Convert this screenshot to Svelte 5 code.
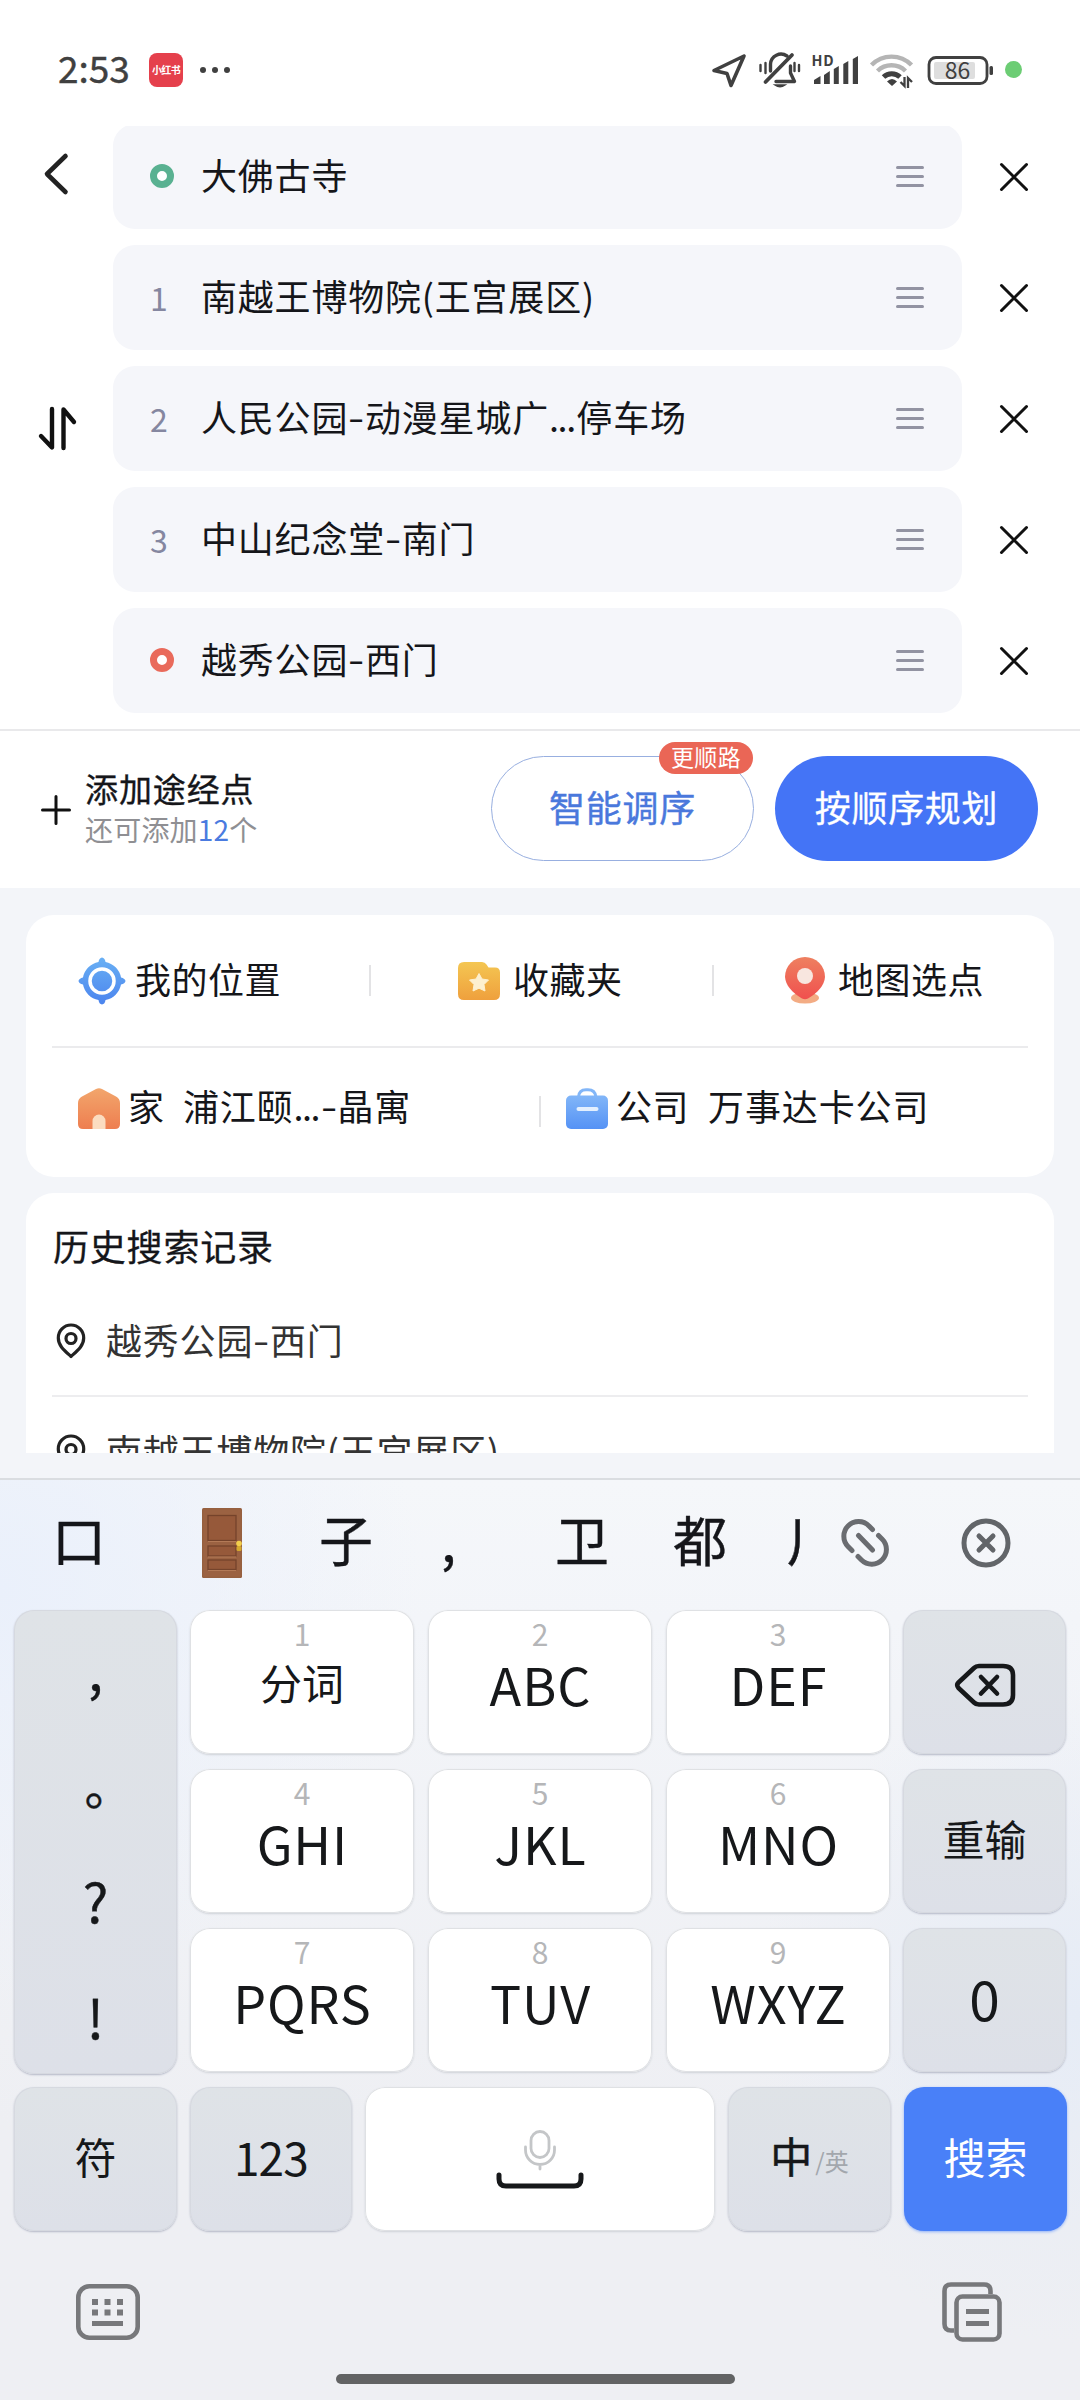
<script>
  const stops = [
    { kind: 'start', name: '大佛古寺' },
    { kind: 'via', no: 1, name: '南越王博物院(王宫展区)' },
    { kind: 'via', no: 2, name: '人民公园-动漫星城广...停车场' },
    { kind: 'via', no: 3, name: '中山纪念堂-南门' },
    { kind: 'end', name: '越秀公园-西门' }
  ];
  const history = ['越秀公园-西门', '南越王博物院(王宫展区)'];
  const letterKeys = [
    ['1', '分词'], ['2', 'ABC'], ['3', 'DEF'],
    ['4', 'GHI'], ['5', 'JKL'], ['6', 'MNO'],
    ['7', 'PQRS'], ['8', 'TUV'], ['9', 'WXYZ']
  ];
  // Splits a place name so hyphens and ellipses can have their own widths.
  const parts = (name) => name.split(/(-|\.\.\.)/);
</script>

{#snippet place(name)}
  {#each parts(name) as p}{#if p === '-'}<i class="dash">-</i>{:else if p === '...'}<i class="ell">...</i>{:else}{p}{/if}{/each}
{/snippet}

<div class="screen">
  <header class="status">
    <span class="time">2:53</span>
    <span class="app">小红书</span>
    <span class="dots"><b></b><b></b><b></b></span>
    <span class="grow"></span>
    <svg class="st-arrow" width="36" height="40" viewBox="711 50 36 40"><path d="M744 56 L714 70.5 L727 73.5 L731 85.5 Z" fill="none" stroke="#404040" stroke-width="3.6" stroke-linejoin="round"/></svg>
    <svg class="st-bell" width="44" height="40" viewBox="758 50 44 40" fill="none" stroke="#404040" stroke-width="3.4" stroke-linecap="round">
      <path d="M787 56 A10.500 10.500 0 0 0 770.500 64 V71"/><path d="M790.500 66 V73 L794.500 81.500 H776" stroke-linejoin="round"/>
      <path d="M792 55 L765.500 82" stroke-width="3.8"/><path d="M775 85 Q780 88.500 785 85Z" fill="#404040" stroke-width="1.500"/>
      <path d="M760.500 65 V71 M765.500 63 V73 M794.500 63 V71 M799 65 V71" stroke-width="2.4"/>
    </svg>
    <svg class="st-signal" width="48" height="40" viewBox="811 50 48 40" fill="#404040">
      <text x="811.5" y="65.5" font-size="14.5" font-weight="bold" textLength="22">HD</text>
      <path d="M814 84 V80 L820.500 76 V84Z M824 84 V75 L829.800 71 V84Z M833.800 84 V69 L838.800 66 V84Z M843.300 84 V64 L848.300 61 V84Z M852.800 84 V59 L858 56 V84Z"/>
    </svg>
    <svg class="st-wifi" width="45" height="40" viewBox="869 50 45 40" fill="none" stroke-width="4.400">
      <path d="M871.500 65 A28 28 0 0 1 911.500 65" stroke="#b5b5b5"/><path d="M877.500 71 A20 20 0 0 1 905.500 71" stroke="#b5b5b5"/>
      <path d="M883.500 77 A12 12 0 0 1 900 77" stroke="#404040" stroke-width="5"/>
      <path d="M892 86 L887 81.500 Q892 76.500 897 81.500Z" fill="#404040"/><path d="M904.500 77 V86 L900.500 82 M908 88 V78 L912 82" stroke="#404040" stroke-width="2.300"/>
    </svg>
    <svg class="st-batt" width="68" height="34" viewBox="927 52 68 34">
      <rect x="929" y="56.500" width="58" height="26" rx="7" fill="none" stroke="#404040" stroke-width="2.800"/>
      <rect x="934" y="61" width="41" height="17" rx="2" fill="#dedede"/><rect x="989.500" y="65" width="3.500" height="9" rx="1.500" fill="#404040"/>
      <text x="957.500" y="77.500" text-anchor="middle" font-size="23" fill="#404040">86</text>
    </svg>
    <span class="live"></span>
  </header>

  <section class="route">
    <div class="side">
      <svg class="back" width="30" height="46" viewBox="42 151 30 46"><path d="M65.500 156 L47 174 L65.500 192" fill="none" stroke="#222" stroke-width="4.600" stroke-linecap="round" stroke-linejoin="round"/></svg>
      <svg class="swap" width="42" height="46" viewBox="37 405 42 46"><path d="M41 436 L52 447.500 V409 M63.500 448 V409.500 L74 422" fill="none" stroke="#111" stroke-width="4.400" stroke-linecap="round" stroke-linejoin="round"/></svg>
    </div>
    <div class="stops">
      {#each stops as s}
        <div class="stop">
          <div class="field">
            <span class="mark">{#if s.kind === 'via'}{s.no}{:else}<span class="ring {s.kind}"></span>{/if}</span>
            <span class="name">{@render place(s.name)}</span>
            <span class="drag"><b></b><b></b><b></b></span>
          </div>
          <svg class="close" width="32" height="32" viewBox="0 0 32 32"><path d="M3.500 3.500 L28.500 28.500 M28.500 3.500 L3.500 28.500" stroke="#111" stroke-width="3" stroke-linecap="round"/></svg>
        </div>
      {/each}
    </div>
  </section>

  <section class="actions">
    <svg class="plus" width="30" height="30" viewBox="0 0 30 30"><path d="M15 1.500 V28.500 M1.500 15 H28.500" stroke="#111" stroke-width="3" stroke-linecap="round"/></svg>
    <div class="add"><div class="add-t">添加途经点</div><div class="add-s">还可添加<em>12</em>个</div></div>
    <button class="pill outline">智能调序<span class="badge">更顺路</span></button>
    <button class="pill solid">按顺序规划</button>
  </section>

  <main class="panel">
    <div class="card quick">
      <div class="qrow">
        <span class="q q1">
          <svg width="48" height="48" viewBox="0 0 48 48"><defs><linearGradient id="gb" x2="0" y2="1"><stop stop-color="#69b0f4"/><stop offset="1" stop-color="#4b84ee"/></linearGradient></defs><path d="M24 .5 Q27 1 27.500 5 A19.500 19.500 0 0 1 43 20.500 Q47 21.500 47.500 24 Q47 26.500 43 27.500 A19.500 19.500 0 0 1 27.500 43 Q27 47 24 47.500 Q21 47 20.500 43 A19.500 19.500 0 0 1 5 27.500 Q1 26.500 .5 24 Q1 21.500 5 20.500 A19.500 19.500 0 0 1 20.500 5 Q21 1 24 .5Z" fill="url(#gb)"/><circle cx="24" cy="24" r="12" fill="none" stroke="#fff" stroke-width="3.500"/></svg>
          <span class="t">我的位置</span></span>
        <span class="bar b1"></span>
        <span class="q q2">
          <svg width="42" height="38" viewBox="0 0 42 38"><defs><linearGradient id="gf" x2="0" y2="1"><stop stop-color="#f4c652"/><stop offset="1" stop-color="#efa03d"/></linearGradient></defs><path d="M6 0 H24 Q27 0 28.500 2.500 L30.500 5.500 H37 Q42 5.500 42 10.500 V32 Q42 38 36 38 H6 Q0 38 0 32 V6 Q0 0 6 0Z" fill="url(#gf)"/><path d="M21 11.500 L24 17 L30.500 18 L26 22.500 L27 29 L21 26.200 L15 29 L16 22.500 L11.500 18 L18 17Z" fill="#fdf0cf" stroke="#fdf0cf" stroke-linejoin="round"/></svg>
          <span class="t">收藏夹</span></span>
        <span class="bar b2"></span>
        <span class="q q3">
          <svg width="40" height="47" viewBox="0 0 40 47"><defs><linearGradient id="gp" x2="0" y2="1"><stop stop-color="#ee8060"/><stop offset="1" stop-color="#f0504e"/></linearGradient></defs><ellipse cx="20" cy="41" rx="14" ry="5.500" fill="#f3ac84"/><path d="M20 0 A20 20 0 0 1 40 20 Q39 32 23 41.500 Q20 43 17 41.500 Q1 32 0 20 A20 20 0 0 1 20 0Z" fill="url(#gp)"/><circle cx="20" cy="19" r="8" fill="#f8e6df"/></svg>
          <span class="t">地图选点</span></span>
      </div>
      <div class="qrow second">
        <span class="q q4">
          <svg width="42" height="41" viewBox="0 0 42 41"><defs><linearGradient id="gh" x2="0" y2="1"><stop stop-color="#f2a66c"/><stop offset="1" stop-color="#ee7e50"/></linearGradient></defs><path d="M18 1 Q21 -.7 24 1 L38 8.500 Q42 10.500 42 15 V36 Q42 41 37 41 H5 Q0 41 0 36 V15 Q0 10.500 4 8.500Z" fill="url(#gh)"/><path d="M14.500 41 V33 A6.500 6.500 0 0 1 27.500 33 V41Z" fill="#fbdcc0"/></svg>
          <span class="t">家</span></span><span class="t v1">{@render place('浦江颐...-晶寓')}</span>
        <span class="bar b3"></span>
        <span class="q q5">
          <svg width="42" height="41" viewBox="0 0 42 41"><defs><linearGradient id="gw" x2="0" y2="1"><stop stop-color="#82b6f8"/><stop offset="1" stop-color="#5592f5"/></linearGradient></defs><path d="M12.500 9 Q13 1.800 20 1.800 H22 Q29 1.800 30 9" fill="none" stroke="#82b6f8" stroke-width="3"/><rect y="7.500" width="42" height="33.500" rx="5" fill="url(#gw)"/><path d="M12.500 21 H30.500" stroke="#e3effe" stroke-width="4" stroke-linecap="round"/></svg>
          <span class="t">公司</span></span><span class="t v2">万事达卡公司</span>
      </div>
    </div>
    <div class="card hist">
      <h2>历史搜索记录</h2>
      {#each history as h}
        <div class="hrow">
          <svg width="30" height="36" viewBox="0 0 30 36" fill="none" stroke="#222" stroke-width="3.200" stroke-linejoin="round"><path d="M15 2 A12.700 12.700 0 0 1 27.700 15 C27.700 23 21 28 15 33.500 C9 28 2.300 23 2.300 15 A12.700 12.700 0 0 1 15 2Z"/><circle cx="15" cy="15.500" r="5"/></svg>
          <span>{@render place(h)}</span>
        </div>
      {/each}
    </div>
  </main>

  <section class="ime">
    <div class="cands">
      <div class="words">
        <span class="c1">口</span>
        <svg class="door" width="40" height="70" viewBox="0 0 40 70"><rect width="40" height="70" rx="1.500" fill="#96603f"/><rect x="1.500" y="1.500" width="37" height="67" fill="#9b6242"/><g fill="#96593a" stroke="#75432b" stroke-width="1.300"><rect x="6" y="7.500" width="28" height="25"/><rect x="6" y="38" width="28" height="10"/><rect x="6" y="52" width="28" height="9.500"/></g><path d="M6 33.500 H34 M6 49 H34 M6 62.500 H34" stroke="#b37a57" stroke-width="1"/><circle cx="37" cy="35.500" r="2.800" fill="#f3cf4b"/><rect x="34.500" y="38" width="5" height="5" rx="1.500" fill="#d6a92e"/></svg>
        <span class="c2">子</span><span class="c3">,</span><span class="c4">卫</span><span class="c5">都</span><span class="c6">川</span>
      </div>
      <svg class="link" width="48" height="48" viewBox="841 1519 48 48" fill="none" stroke="#6a6c70" stroke-width="5" stroke-linecap="round"><path d="M872.500 1529.500 L869 1526 A14.500 14.500 0 0 0 848 1546.500 L852 1550.500 M858 1556.500 L861.500 1560 A14.500 14.500 0 0 0 882 1539 L878.500 1535.500 M858.500 1535.500 L872.500 1550"/></svg>
      <svg class="stop-x" width="50" height="50" viewBox="0 0 50 50" fill="none" stroke="#626569" stroke-width="5" stroke-linecap="round"><circle cx="25" cy="25" r="22"/><path d="M18 18 L32 32 M32 18 L18 32"/></svg>
    </div>
    <div class="keys">
      <div class="key dim marks"><span>,</span><span class="stopmark">。</span><span>?</span><span>!</span></div>
      <div class="mid">
        {#each letterKeys as [n, t]}
          <div class="key"><small>{n}</small><span class={n === '1' ? 'cn' : 'lat'}>{t}</span></div>
        {/each}
      </div>
      <div class="right">
        <div class="key dim center"><svg class="del" width="62" height="44" viewBox="0 0 62 44" fill="none" stroke="#16181a" stroke-width="4.600" stroke-linecap="round" stroke-linejoin="round"><path d="M25 3 H49 Q59 3 59 12 V32 Q59 41.500 49 41.500 H25 Q22 41.500 20 39.500 L4.500 25 Q2 22 4.500 19.500 L20 5 Q22 3 25 3Z"/><path d="M27 14 L43 30.500 M43 14 L27 30.500"/></svg></div>
        <div class="key dim center cn">重输</div>
        <div class="key dim center zero">0</div>
      </div>
    </div>
    <div class="bottom">
      <div class="key dim center cn">符</div>
      <div class="key dim center num">123</div>
      <div class="key space center">
        <svg width="90" height="64" viewBox="495 2121 90 64" fill="none" stroke-linecap="round"><g stroke="#c4c6c8" stroke-width="2.800"><rect x="531" y="2125.500" width="18" height="26" rx="9"/><path d="M525.500 2141 V2144 A14.500 14.500 0 0 0 554.500 2144 V2141 M540 2158.500 V2163"/></g><path d="M499 2169 V2173 Q499 2180 506 2180 H574 Q581 2180 581 2173 V2169" stroke="#16181a" stroke-width="5"/></svg>
      </div>
      <div class="key dim center cn zh">中<small>/英</small></div>
      <div class="key go center cn">搜索</div>
    </div>
    <div class="tools">
      <svg width="64" height="56" viewBox="0 0 64 56"><rect x="2.300" y="2.300" width="59.400" height="51.400" rx="11" fill="none" stroke="#77787b" stroke-width="4.600"/><path d="M16 15 h6 v6 h-6z M28.500 15 h6 v6 h-6z M41 15 h6 v6 h-6z M16 25.500 h6 v6 h-6z M28.500 25.500 h6 v6 h-6z M41 25.500 h6 v6 h-6z M16 37 h31 v5 h-31z" fill="#77787b"/></svg>
      <svg width="60" height="60" viewBox="0 0 60 60" fill="none" stroke="#77787b" stroke-width="4.600"><path d="M12 48.500 H9 Q2.500 48.500 2.500 42 V9 Q2.500 2.500 9 2.500 H42 Q48.500 2.500 48.500 9 V12"/><rect x="14.500" y="14.500" width="43" height="43" rx="6"/><path d="M24 29.500 H47 M24 41.500 H47" stroke-width="5"/></svg>
    </div>
    <div class="home"></div>
  </section>
</div>

<style>
  .screen { width: 1080px; height: 2400px; display: flex; flex-direction: column; background: linear-gradient(#fff 1400px, #f3f5f9 1400px); overflow: hidden; color: #15161a; font-family: "Noto Sans CJK SC", "Noto Sans", sans-serif; }
  .screen * { box-sizing: border-box; }
  svg { flex: none; display: block; }
  i { font-style: normal; }
  .dash { display: inline-block; transform: translateY(-1.5px) scaleX(1.3); margin: 0 1.5px 0 2px; }
  .ell { letter-spacing: -1.4px; margin-right: 1.5px; }

  .status { height: 126px; flex: none; display: flex; align-items: center; padding: 14px 58px 0 58px; }
  .time { width: 91px; font-size: 37px; line-height: 40px; margin-top: -6px; color: #404040; -webkit-text-stroke: .4px #404040; }
  .app { width: 34px; height: 34px; border-radius: 8px; background: #e5404c; color: #fff; font-size: 10px; font-weight: 700; line-height: 33px; text-align: center; letter-spacing: -.6px; }
  .dots { display: flex; gap: 6px; margin-left: 17px; }
  .dots b { width: 6px; height: 6px; border-radius: 50%; background: #404040; }
  .grow { flex: 1; }
  .st-bell { margin-left: 11px; }
  .st-signal { margin-left: 9px; }
  .st-wifi { margin-left: 10px; }
  .st-batt { margin-left: 13px; }
  .live { width: 17px; height: 17px; border-radius: 50%; background: #6ccd74; margin-left: 10px; margin-top: -1px; }

  .route { height: 603px; flex: none; display: flex; overflow: hidden; }
  .side { width: 113px; flex: none; }
  .back { margin: 25px 0 0 42px; }
  .swap { margin: 208px 0 0 37px; }
  .stops { flex: 1; display: flex; flex-direction: column; gap: 16px; margin-top: -2px; }
  .stop { display: flex; align-items: center; }
  .field { width: 849px; height: 105px; border-radius: 22px; background: #f5f6fa; display: flex; align-items: center; padding: 0 38px 0 37px; }
  .mark { width: 51px; font-size: 32px; color: #8587a0; line-height: 40px; padding-bottom: 2px; }
  .ring { display: block; width: 24px; height: 24px; border-radius: 50%; background: #fff; border: 7px solid #59b191; }
  .ring.end { border-color: #e96a5b; }
  .name { flex: 1; font-size: 36px; line-height: 50px; letter-spacing: .8px; padding-bottom: 6px; white-space: nowrap; }
  .drag { display: flex; flex-direction: column; gap: 6px; width: 28px; }
  .drag b { height: 3px; border-radius: 2px; background: #9293a2; }
  .close { margin-left: 36px; }

  .actions { height: 159px; flex: none; border-top: 2px solid #e9e9eb; display: flex; align-items: center; padding: 0 42px 2px 41px; }
  .add { margin-left: 14px; width: 406px; padding-bottom: 3px; }
  .plus { margin-top: 2px; }
  .add-t { font-size: 33px; line-height: 40px; letter-spacing: .9px; -webkit-text-stroke: .35px currentColor; }
  .add-s { margin-top: 4px; font-size: 28px; line-height: 34px; letter-spacing: .2px; color: #8f8f93; }
  .add-s em { font-style: normal; color: #4a7be0; }
  .pill { position: relative; width: 263px; height: 105px; flex: none; border-radius: 53px; font: inherit; font-size: 36px; letter-spacing: .7px; line-height: 50px; padding: 0 0 6px; border: 0; white-space: nowrap; }
  .outline { background: #fff; border: 1.5px solid #98afe0; color: #4a78dc; -webkit-text-stroke: .4px currentColor; }
  .solid { background: #4474f6; color: #fff; margin-left: 21px; -webkit-text-stroke: .3px currentColor; }
  .badge { position: absolute; right: 0; top: -15px; width: 94px; height: 32px; border-radius: 16px; background: #ea6656; color: #fff; font-size: 23px; line-height: 29px; text-align: center; letter-spacing: .4px; -webkit-text-stroke: 0; }

  .panel { height: 565px; flex: none; background: #f3f5f9; padding: 27px 26px 0; overflow: hidden; }
  .card { background: #fff; border-radius: 28px; padding: 0 26px; }
  .quick { height: 262px; font-size: 36px; line-height: 50px; letter-spacing: .5px; white-space: nowrap; }
  .qrow { height: 131px; display: flex; align-items: center; padding-left: 26px; }
  .qrow.second { border-top: 2px solid #ebebed; padding-bottom: 9px; }
  .t { margin-top: -6px; }
  .q { display: flex; align-items: center; }
  .q1 { width: 291px; gap: 9px; }
  .bar { width: 2px; height: 31px; background: #e3e3e5; }
  .q2 { width: 254px; margin-left: 87px; gap: 13px; }
  .q3 { margin-left: 71px; gap: 13px; }
  .q4 { width: 105px; gap: 8px; }
  .v1 { width: 356px; letter-spacing: .8px; }
  .b3 { margin-top: 7px; }
  .q5 { margin-left: 25px; gap: 8px; width: 142px; }
  .v2 { letter-spacing: .9px; }

  .hist { margin-top: 16px; height: 330px; }
  h2 { margin: 0; padding: 27px 0 0 1px; font-size: 36px; font-weight: 400; line-height: 50px; letter-spacing: .8px; -webkit-text-stroke: .3px currentColor; }
  .hrow { height: 110px; display: flex; align-items: center; gap: 20px; padding-left: 4px; font-size: 36px; letter-spacing: .8px; color: #333; white-space: nowrap; }
  h2 + .hrow { height: 127px; padding-top: 17px; border-bottom: 2px solid #ededef; }
  .hrow span { line-height: 50px; margin-top: -4px; }

  .ime { margin-top: 25px; flex: 1; border-top: 2px solid #dadde1; display: flex; flex-direction: column; background: radial-gradient(circle at 0 12%, #eaf0fb 0, #eaf0fb00 420px), radial-gradient(circle at 100% 58%, #e6ecf6 0, #e6ecf600 330px), linear-gradient(#f5f7fa 0, #f3f5f9 15%, #eeeff3 70%); }
  .cands { height: 130px; display: flex; align-items: center; }
  .words { width: 801px; height: 100%; display: flex; align-items: center; overflow: hidden; font-size: 54px; line-height: 70px; padding-left: 52px; white-space: nowrap; -webkit-text-stroke: .4px currentColor; }
  .words span { flex: none; margin-top: -12px; }
  .c1 { width: 150px; }
  .door { margin-top: -5px; }
  .c2 { width: 122px; margin-left: 77px; }
  .c3 { width: 114px; }
  .c4 { width: 118px; }
  .c5 { width: 114px; }
  .link { margin-left: 40px; margin-top: -5px; }
  .stop-x { margin-left: 72px; margin-top: -5px; }
  .keys { display: grid; grid-template-columns: 163px 700px 163px; gap: 13px; height: 462px; padding: 0 14px; }
  .mid { display: grid; grid-template-columns: repeat(3, 1fr); grid-template-rows: repeat(3, 144px); gap: 15px 14px; }
  .right { display: grid; grid-template-rows: repeat(3, 144px); gap: 15px; }
  .key { border-radius: 20px; background: #fff; box-shadow: inset 0 0 0 1px #dfe1e4, 0 1px 2px #cfd2d8; display: flex; flex-direction: column; align-items: center; color: #16181a; }
  .key.dim { background: linear-gradient(#dfe3e7, #dde0e8); box-shadow: inset 0 0 0 1px #d6d9e0, 0 1px 2px #b3b7c6; }
  .key.center { flex-direction: row; justify-content: center; }
  .mid small { font-size: 30px; line-height: 30px; color: #b5b6b8; margin-top: 8px; }
  .lat { font-size: 52px; line-height: 60px; margin-top: 6px; letter-spacing: .9px; margin-right: -.9px; }
  .mid .cn { line-height: 56px; margin-top: 6px; }
  .cn { font-size: 42px; line-height: 60px; }
  .del { margin-top: 5px; }
  .key.center.cn { padding-bottom: 6px; }
  .num { padding-bottom: 6px; font-size: 46px; letter-spacing: -.8px; }
  .zero { padding-bottom: 6px; font-size: 55px; }
  .marks { display: grid; grid-template-rows: repeat(4, 1fr); font-size: 54px; justify-items: center; -webkit-text-stroke: .4px currentColor; }
  .marks span { line-height: 110px; }
  .marks .stopmark { width: 20px; margin-left: -2px; font-size: 48px; line-height: 116px; }
  .bottom { display: grid; grid-template-columns: 163px 162px 350px 163px 163px; gap: 13px; height: 144px; padding: 0 14px; margin-top: 15px; }
  .key.zh.center { padding-bottom: 9px; -webkit-text-stroke: .5px currentColor; }
  .zh small { font-size: 24px; color: #a3a7ad; margin: 12px 0 0 3px; -webkit-text-stroke: 0; }
  .go.key { background: #4980f8; color: #fff; box-shadow: 0 1px 3px #8fb0f8; }
  .tools { display: flex; justify-content: space-between; align-items: center; height: 60px; padding: 0 78px 0 76px; margin-top: 51px; }
  .home { width: 399px; height: 10px; border-radius: 5px; background: #626364; margin: 32px 0 0 336px; }
</style>
